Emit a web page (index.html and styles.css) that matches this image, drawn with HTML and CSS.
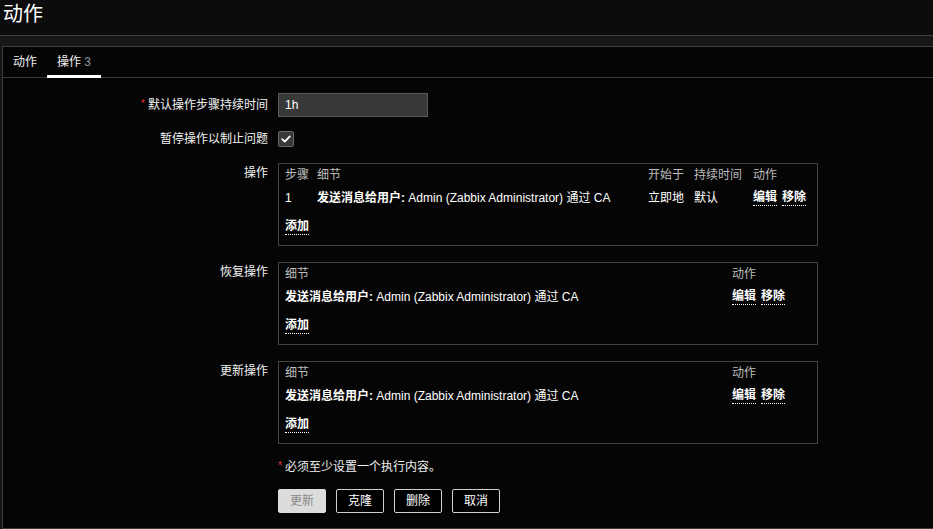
FILE: index.html
```html
<!DOCTYPE html>
<html lang="zh-CN">
<head>
<meta charset="utf-8">
<title>动作</title>
<link rel="stylesheet" href="styles.css">
</head>
<body>
<header class="page-header">
  <h1 class="page-title">动作</h1>
</header>
<main class="content">
  <section class="container">
    <ul class="tabs">
      <li class="tab">动作</li>
      <li class="tab tab-active">操作 <span class="tab-count">3</span></li>
    </ul>
    <form class="form">
      <div class="form-row row-input">
        <label class="form-label"><span class="required">*</span>默认操作步骤持续时间</label>
        <div class="form-field"><input class="text-input" type="text" value="1h"></div>
      </div>
      <div class="form-row row-check">
        <label class="form-label">暂停操作以制止问题</label>
        <div class="form-field">
          <span class="checkbox">
            <svg width="12" height="12" viewBox="0 0 12 12"><path d="M2.2 6.2 L4.8 8.6 L9.8 3.4" fill="none" stroke="#fff" stroke-width="1.8" stroke-linecap="round" stroke-linejoin="round"/></svg>
          </span>
        </div>
      </div>
      <div class="form-row row-box">
        <label class="form-label label-top">操作</label>
        <div class="form-field">
          <div class="op-box">
            <div class="op-grid cols-5 op-head">
              <span>步骤</span><span>细节</span><span>开始于</span><span>持续时间</span><span>动作</span>
            </div>
            <div class="op-grid cols-5 op-row">
              <span>1</span>
              <span><b>发送消息给用户:</b> Admin (Zabbix Administrator) 通过 CA</span>
              <span>立即地</span>
              <span>默认</span>
              <span class="actions"><a class="link-action">编辑</a><a class="link-action">移除</a></span>
            </div>
            <div class="op-add"><a class="link-action">添加</a></div>
          </div>
        </div>
      </div>
      <div class="form-row row-box">
        <label class="form-label label-top">恢复操作</label>
        <div class="form-field">
          <div class="op-box">
            <div class="op-grid cols-2 op-head">
              <span>细节</span><span>动作</span>
            </div>
            <div class="op-grid cols-2 op-row">
              <span><b>发送消息给用户:</b> Admin (Zabbix Administrator) 通过 CA</span>
              <span class="actions"><a class="link-action">编辑</a><a class="link-action">移除</a></span>
            </div>
            <div class="op-add"><a class="link-action">添加</a></div>
          </div>
        </div>
      </div>
      <div class="form-row row-box">
        <label class="form-label label-top">更新操作</label>
        <div class="form-field">
          <div class="op-box">
            <div class="op-grid cols-2 op-head">
              <span>细节</span><span>动作</span>
            </div>
            <div class="op-grid cols-2 op-row">
              <span><b>发送消息给用户:</b> Admin (Zabbix Administrator) 通过 CA</span>
              <span class="actions"><a class="link-action">编辑</a><a class="link-action">移除</a></span>
            </div>
            <div class="op-add"><a class="link-action">添加</a></div>
          </div>
        </div>
      </div>
      <div class="form-row row-note">
        <div class="form-label"></div>
        <div class="form-field note"><span class="required">*</span>必须至少设置一个执行内容。</div>
      </div>
      <div class="form-row row-buttons">
        <div class="form-label"></div>
        <div class="form-field buttons">
          <button type="button" class="btn btn-disabled" disabled>更新</button>
          <button type="button" class="btn">克隆</button>
          <button type="button" class="btn">删除</button>
          <button type="button" class="btn">取消</button>
        </div>
      </div>
    </form>
  </section>
</main>
</body>
</html>
```

FILE: styles.css
```css
* { box-sizing: border-box; }

html, body {
  margin: 0;
  padding: 0;
}

body {
  background: #171717;
  color: #f2f2f2;
  font-family: "Liberation Sans", Arial, "Noto Sans CJK SC", sans-serif;
  font-size: 12px;
  line-height: 14px;
  height: 529px;
  overflow: hidden;
}

.page-header {
  background: #0c0c0c;
  height: 36px;
  border-bottom: 1px solid #3c3c3c;
}

.page-title {
  margin: 0;
  padding-left: 3px;
  font-size: 20px;
  font-weight: normal;
  line-height: 28px;
  color: #ffffff;
}

.content {
  padding: 10px 0 0 2px;
}

.container {
  background: #050505;
  border: 1px solid #3c3c3c;
  border-right: none;
}

.tabs {
  list-style: none;
  margin: 0;
  padding: 0;
  display: flex;
  height: 31px;
  border-bottom: 1px solid #3a3a3a;
}

.tab {
  position: relative;
  padding: 0 10px;
  line-height: 30px;
  color: #f2f2f2;
}

.tab-active::after {
  content: "";
  position: absolute;
  left: 0;
  right: 0;
  bottom: -1px;
  height: 3px;
  background: #ffffff;
}

.tab-count {
  color: #8d979f;
}

.form {
  padding: 15px 0 15px 0;
}

.form-row {
  display: grid;
  grid-template-columns: 265px 1fr;
  column-gap: 10px;
  margin-bottom: 16px;
}

.form-label {
  text-align: right;
  color: #f2f2f2;
}

.row-input {
  margin-bottom: 13px;
}

.row-input .form-label {
  line-height: 24px;
}

.row-check .form-label {
  line-height: 16px;
}

.label-top {
  line-height: 20px;
}

.required {
  color: #e33734;
  font-size: 10px;
  margin-right: 3px;
  position: relative;
  top: -2px;
}

.text-input {
  display: block;
  width: 150px;
  height: 24px;
  background: #383838;
  border: 1px solid #5a5a5a;
  color: #ffffff;
  font: inherit;
  padding: 0 6px;
  margin: 0;
}

.checkbox {
  display: flex;
  align-items: center;
  justify-content: center;
  width: 16px;
  height: 16px;
  background: #383838;
  border: 1px solid #686868;
  border-radius: 2px;
}

.op-box {
  width: 540px;
  border: 1px solid #444444;
  padding: 0 6px 6px 6px;
}

.op-grid {
  display: grid;
}

.cols-5 {
  grid-template-columns: 32px 331px 46px 59px 1fr;
}

.cols-2 {
  grid-template-columns: 447px 1fr;
}

.op-head {
  height: 22px;
  line-height: 22px;
  color: #bcbcbc;
}

.op-row {
  height: 24px;
  line-height: 24px;
  color: #ffffff;
  white-space: nowrap;
}

.op-row b {
  font-weight: bold;
}

.actions {
  display: flex;
  gap: 5px;
}

.link-action {
  font-weight: bold;
  color: #ffffff;
  line-height: 14px;
  padding-bottom: 1px;
  border-bottom: 1px dotted #ffffff;
  text-decoration: none;
}

.op-row .link-action {
  align-self: center;
}

.op-add {
  margin-top: 5px;
  height: 24px;
  display: flex;
  align-items: center;
}

.row-note {
  margin-bottom: 14px;
}

.note {
  color: #f2f2f2;
  line-height: 14px;
}

.note .required {
  margin-right: 3px;
}

.row-buttons {
  margin-bottom: 0;
}

.buttons {
  display: flex;
  gap: 10px;
}

.btn {
  height: 24px;
  padding: 0 11px;
  margin: 0;
  background: #000000;
  color: #ffffff;
  border: 1px solid #d0d0d0;
  border-radius: 2px;
  font: inherit;
  line-height: 22px;
}

.btn-disabled {
  background: #dcdcdc;
  border-color: #dcdcdc;
  color: #8a8a8a;
}
```
